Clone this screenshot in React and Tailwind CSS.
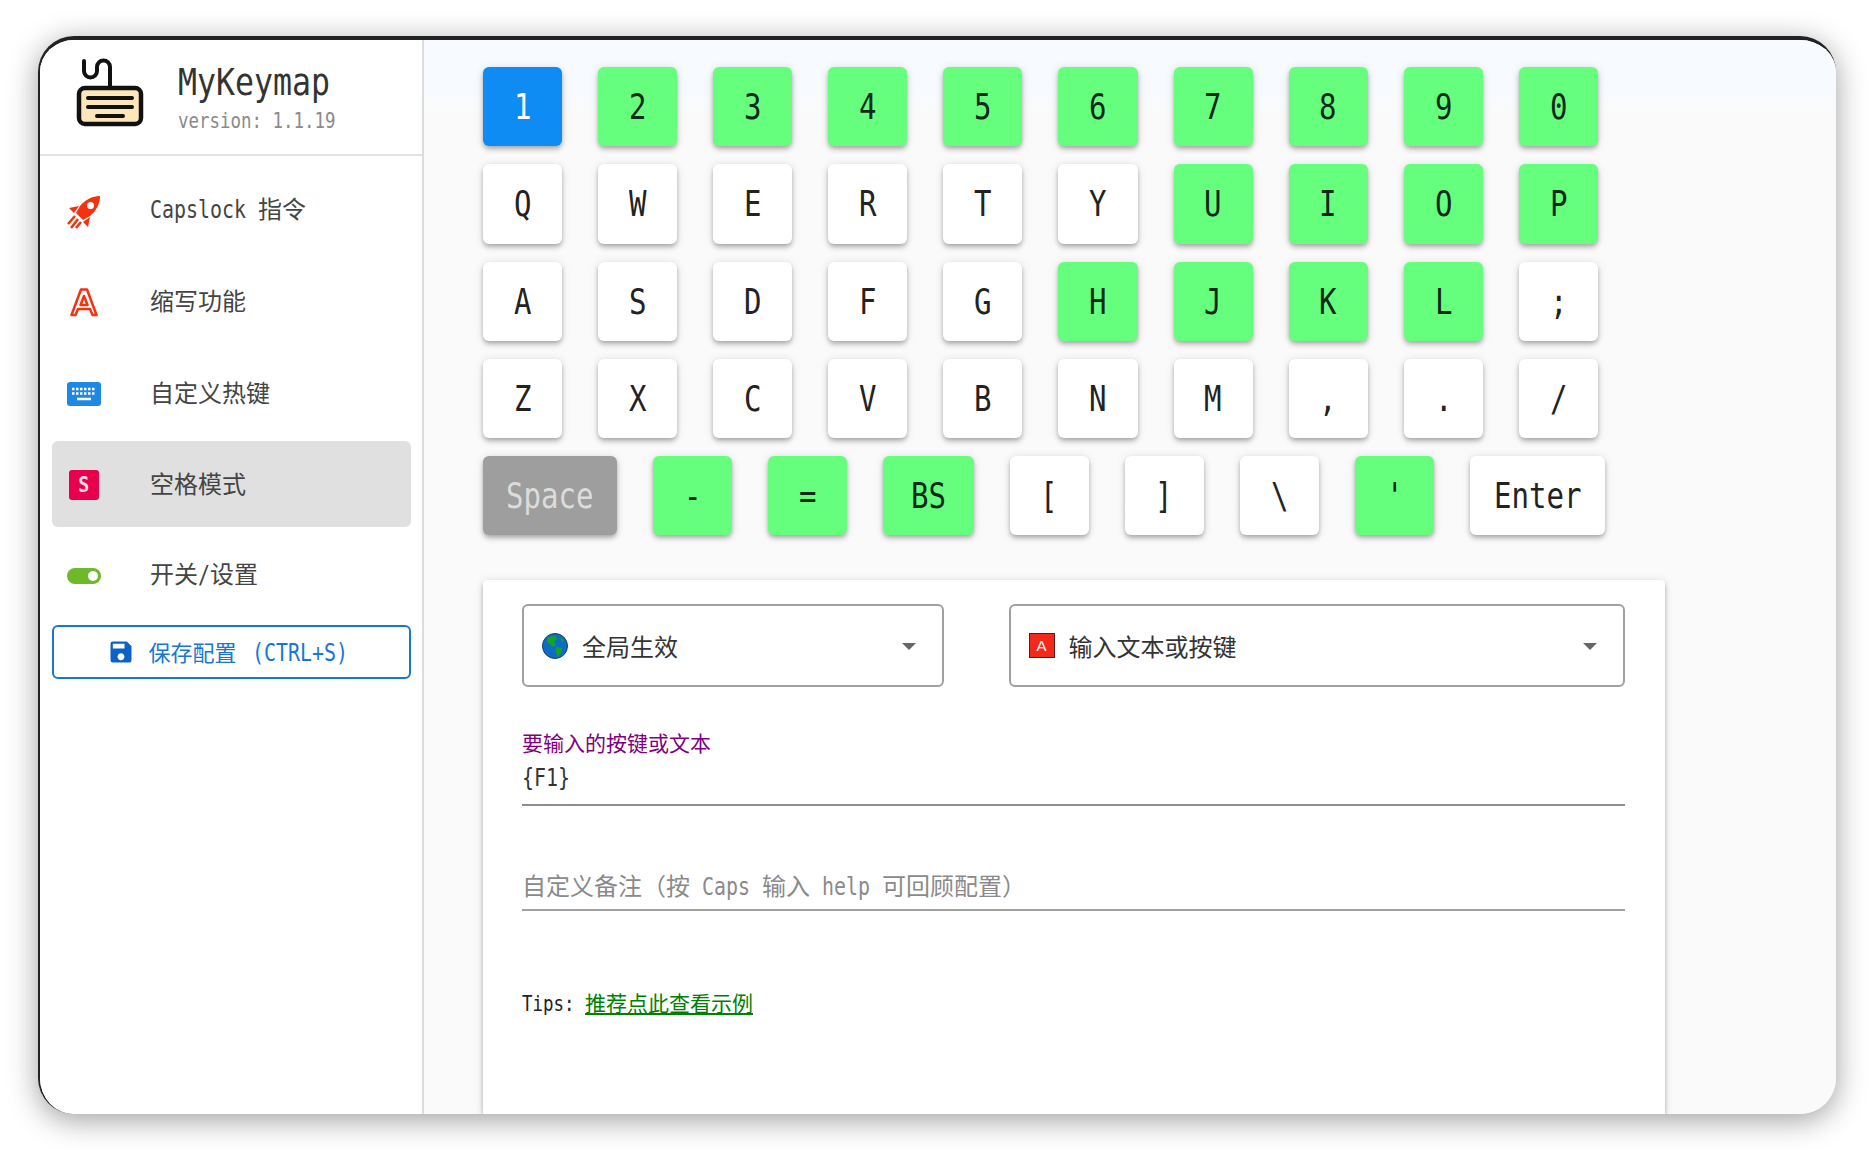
import { MdSave } from 'react-icons/md';

const CARD_SHADOW =
  'shadow-[0_2px_4px_-1px_rgba(0,0,0,0.2),0_4px_5px_0_rgba(0,0,0,0.14),0_1px_10px_0_rgba(0,0,0,0.12)]';

const GREEN = new Set('234567890UIOPHJKL-=\'BS'.split('').filter((c) => c !== 'B' && c !== 'S'));
GREEN.add('BS');

const ROWS = [
  ['1', '2', '3', '4', '5', '6', '7', '8', '9', '0'],
  ['Q', 'W', 'E', 'R', 'T', 'Y', 'U', 'I', 'O', 'P'],
  ['A', 'S', 'D', 'F', 'G', 'H', 'J', 'K', 'L', ';'],
  ['Z', 'X', 'C', 'V', 'B', 'N', 'M', ',', '.', '/'],
  ['Space', '-', '=', 'BS', '[', ']', '\\', "'", 'Enter'],
];

// the app uses a half-width mono font, so squeeze DejaVu to half an em per char
function Mono({ children, className = '' }) {
  return (
    <span
      className={`inline-block origin-left scale-x-[0.83] whitespace-pre font-['DejaVu_Sans_Mono',monospace] ${className}`}
      style={{ width: `${children.length / 2}em` }}
    >
      {children}
    </span>
  );
}

function Key({ label }) {
  let color = 'bg-white text-[#222]';
  if (label === '1') color = 'bg-[#0f8cf3] text-white';
  else if (label === 'Space') color = 'bg-[#9e9e9e] text-[#dcdcdc]';
  else if (GREEN.has(label)) color = 'bg-[#66ff7d] text-[#12281a]';

  let width = 'w-[79.100px]';
  if (label === 'Space') width = 'w-[134px]';
  if (label === 'BS') width = 'w-[90.400px]';
  if (label === 'Enter') width = 'w-[135px]';

  return (
    <div className={`${width} ${color} ${CARD_SHADOW} flex h-[79.300px] shrink-0 items-center justify-center rounded-md pt-[2px] text-[35px] leading-none`}>
      <Mono>{label}</Mono>
    </div>
  );
}

function Logo() {
  return (
    <svg width="70" height="72" viewBox="0 0 70 72" fill="none" stroke="#111" strokeWidth="4" strokeLinecap="round">
      <path d="M9 4V14a6.500 6.500 0 0 0 13 0V10a6.500 6.500 0 0 1 13 0V31" />
      <rect x="4" y="31" width="62" height="36" rx="6" fill="#fde7b9" strokeWidth="4.500" />
      <path d="M13 41H57M13 50H57M22 59H48" />
    </svg>
  );
}

function RocketIcon() {
  return (
    <svg width="34" height="34" viewBox="0 0 34 34" className="mt-[2px]">
      <path d="M33 1C25 1 18 5 13 11L9 18L16 25L23 21C29 16 33 9 33 1Z" fill="#f5320f" />
      <circle cx="23.500" cy="10.500" r="3.500" fill="#fff" />
      <path d="M12 11L2 13L7 18ZM23 22L21 32L16 27Z" fill="#f5320f" />
      <path d="M8 21L1 29M11 24L4 33M14 27L9 33" stroke="#f5320f" strokeWidth="2.500" />
    </svg>
  );
}

function LetterIcon() {
  return (
    <svg width="30" height="30" viewBox="0 0 30 30" fill="none" stroke="#f5320f" strokeWidth="2.500" strokeLinejoin="round">
      <path d="M2.500 28H6.500L9 22H21L23.500 28H27.500L18 2.500H12Z" />
      <path d="M15 9L18.500 18H11.500Z" />
    </svg>
  );
}

function KeyboardIcon() {
  return (
    <svg width="34" height="24" viewBox="0 0 34 24">
      <rect width="34" height="24" rx="3" fill="#1e88e5" />
      <path d="M5 7H29M5 11.500H29" stroke="#fff" strokeWidth="2.500" strokeDasharray="2.500 1.500" />
      <path d="M10 17H24" stroke="#fff" strokeWidth="2.500" />
    </svg>
  );
}

function SpaceIcon() {
  return (
    <div className="flex h-[30px] w-[30px] items-center justify-center rounded-[3px] bg-[#e8004c] font-['DejaVu_Sans_Mono',monospace] text-[22px] font-bold leading-none text-[#ffd9e4]">
      <span className="scale-x-[0.83]">S</span>
    </div>
  );
}

function ToggleIcon() {
  return (
    <div className="flex h-4 w-[34px] items-center justify-end rounded-full bg-[#6eb92b] pr-[3px]">
      <div className="h-[10px] w-[10px] rounded-full bg-white" />
    </div>
  );
}

function GlobeIcon() {
  return (
    <svg width="26" height="26" viewBox="0 0 26 26">
      <circle cx="13" cy="13" r="12.500" fill="#0f6cc4" stroke="#10405f" strokeWidth="1" />
      <path d="M6 4L13 3L15 6L12 9L14 12L11 14L8 11L5 9ZM14 14L20 15L19 20L16 24L14 19ZM18 4L22 7L20 9Z" fill="#12a51e" />
    </svg>
  );
}

function NavItem({ icon, active, children }) {
  return (
    <div className={`flex h-[86px] items-center rounded-md ${active ? 'bg-[#e0e0e0]' : ''}`}>
      <div className="flex w-[98px] justify-center pt-[2px] pr-[35px]">{icon}</div>
      <div className="-mt-[2px] text-[24px] leading-none text-[#444]">{children}</div>
    </div>
  );
}

function Caret() {
  return <div className="mt-[2px] h-0 w-0 border-x-[7px] border-t-[7px] border-x-transparent border-t-[#666]" />;
}

function SelectBox({ icon, width, children }) {
  return (
    <div className={`${width} flex h-[83px] items-center rounded-md border-2 border-[#a0a0a0] pr-[26px] pl-[18px]`}>
      <div className="flex w-[40px] shrink-0">{icon}</div>
      <div className="flex-1 text-[24px] leading-none text-[#333]">{children}</div>
      <Caret />
    </div>
  );
}

export default function App() {
  return (
    <div className="h-[1150px] w-[1872px] overflow-hidden bg-white pt-[36px] pl-[38px] font-['Noto_Sans_CJK_SC',sans-serif]">
      <div className="flex h-[1078px] w-[1798px] overflow-hidden rounded-[36px] border-t-4 border-l-2 border-[#222] bg-[#fafafa] shadow-[0_6px_30px_rgba(0,0,0,0.38)]">
        {/* Sidebar */}
        <aside className="flex w-[384px] shrink-0 flex-col border-r-2 border-[#dcdcdc] bg-white">
          <div className="flex h-[116px] shrink-0 items-center border-b-2 border-[#e2e2e2] pl-[35px]">
            <div className="-mt-[9px]"><Logo /></div>
            <div className="-mt-[3px] pl-[33px]">
              <div className="-mt-[3px] h-[45px] text-[38px] leading-[44px] text-[#333]"><Mono>MyKeymap</Mono></div>
              <div className="mt-[4px] h-[26px] text-[21px] leading-[26px] text-[#8a8a8a]"><Mono>version: 1.1.19</Mono></div>
            </div>
          </div>
          <nav className="mr-[11px] ml-[12px] flex flex-col gap-[5.300px] pt-[11px]">
            <NavItem icon={<RocketIcon />}><Mono>Capslock </Mono>指令</NavItem>
            <NavItem icon={<LetterIcon />}>缩写功能</NavItem>
            <NavItem icon={<KeyboardIcon />}>自定义热键</NavItem>
            <NavItem icon={<SpaceIcon />} active>空格模式</NavItem>
            <NavItem icon={<ToggleIcon />}>开关<Mono>/</Mono>设置</NavItem>
            <div className="mt-[2px] flex h-[54px] items-center justify-center rounded-md border-2 border-[#1976d2] pr-[8px] text-[22px] leading-none text-[#1976d2]">
              <MdSave className="mr-[13px] text-[#0b63c5]" size={28} />
              <span>保存配置<Mono className="ml-[3px] text-[24px]"> (CTRL+S)</Mono></span>
            </div>
          </nav>
        </aside>

        {/* Keyboard and form */}
        <main className="flex flex-1 flex-col bg-linear-to-b from-[#f7fbff] from-[50px] to-[#fafafa] to-[70px] pt-[27px] pl-[59px]">
          <div className="flex flex-col gap-y-[18px]">
            {ROWS.map((row, i) => (
              <div key={i} className="flex gap-x-[36px]">
                {row.map((label) => <Key key={label} label={label} />)}
              </div>
            ))}
          </div>

          <section className={`mt-[45px] w-[1182px] flex-1 rounded-t-[4px] bg-white pt-[24px] pr-[40px] pl-[39px] ${CARD_SHADOW}`}>
            <div className="flex gap-x-[65px]">
              <SelectBox icon={<GlobeIcon />} width="w-[422px]">全局生效</SelectBox>
              <SelectBox
                icon={
                  <div className="flex h-[25px] w-[26px] items-center justify-center border border-[#5a1a10] bg-[#f22a1a] font-['Liberation_Sans',sans-serif] text-[15px] leading-none text-white">
                    A
                  </div>
                }
                width="w-[617px]"
              >
                输入文本或按键
              </SelectBox>
            </div>

            <div className="mt-[44px] h-[75px] border-b-2 border-[#8e8e8e]">
              <div className="h-[24px] text-[21px] leading-[22px] text-[#800080]">要输入的按键或文本</div>
              <div className="mt-[3px] h-[36px] text-[24px] leading-[36px] text-[#333]"><Mono>{'{F1}'}</Mono></div>
            </div>

            <div className="mt-[68px] h-[37px] border-b-2 border-[#a0a0a0] text-[24px] leading-[22px] text-[#8a8a8a]">
              自定义备注（按<Mono> Caps </Mono>输入<Mono> help </Mono>可回顾配置）
            </div>

            <div className="mt-[78px] text-[21px] leading-[26px] text-[#222]">
              <Mono>Tips: </Mono>
              <a className="text-[#008000] underline">推荐点此查看示例</a>
            </div>
          </section>
        </main>
      </div>
    </div>
  );
}
